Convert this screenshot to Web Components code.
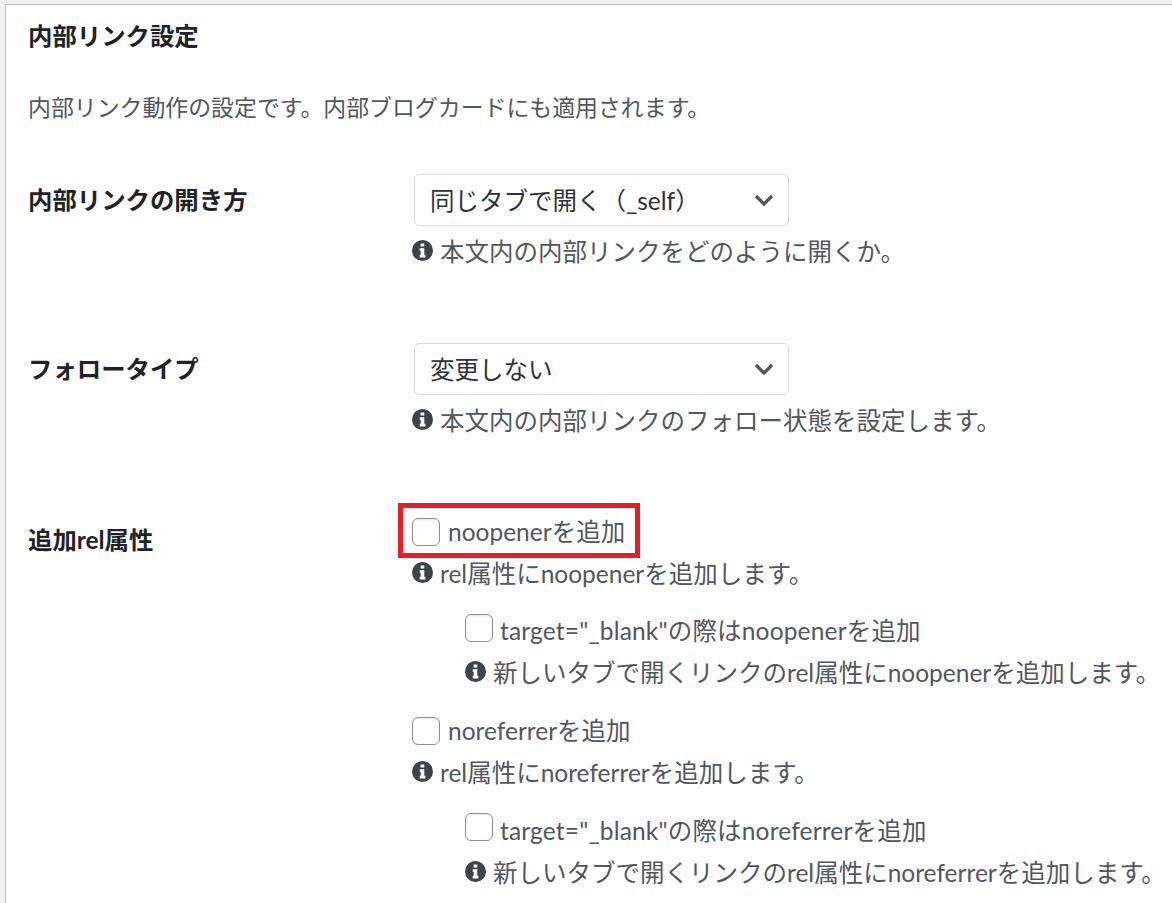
<!DOCTYPE html>
<html lang="ja">
<head>
<meta charset="utf-8">
<title>内部リンク設定</title>
<style>
html, body { margin: 0; height: 903px; overflow: hidden; }
body {
    background: #f0f0f1;
    color: #3c434a;
    font-family: "Lato", "Noto Sans CJK JP", sans-serif;
    font-size: 24.5px;
}
.sub { padding: 25px 0 0 53px; }
.sub check-option { letter-spacing: .17px; --label-gap: 7px; }
.next { padding-top: 26px; }
</style>
</head>
<body>

<settings-card heading="内部リンク設定" description="内部リンク動作の設定です。内部ブログカードにも適用されます。">
    <setting-row label="内部リンクの開き方" gap="77">
        <select-box value="同じタブで開く（_self）"></select-box>
        <help-note>本文内の内部リンクをどのように開くか。</help-note>
    </setting-row>
    <setting-row label="フォロータイプ" gap="79">
        <select-box value="変更しない"></select-box>
        <help-note>本文内の内部リンクのフォロー状態を設定します。</help-note>
    </setting-row>
    <setting-row label="追加rel属性">
        <check-option marked>noopenerを追加</check-option>
        <help-note>rel属性にnoopenerを追加します。</help-note>
        <div class="sub" style="--box-y:-1px">
            <check-option>target="_blank"の際はnoopenerを追加</check-option>
            <help-note>新しいタブで開くリンクのrel属性にnoopenerを追加します。</help-note>
        </div>
        <div class="next">
            <check-option>noreferrerを追加</check-option>
            <help-note>rel属性にnoreferrerを追加します。</help-note>
        </div>
        <div class="sub" style="padding-top:26px;--box-y:-2px">
            <check-option>target="_blank"の際はnoreferrerを追加</check-option>
            <help-note>新しいタブで開くリンクのrel属性にnoreferrerを追加します。</help-note>
        </div>
    </setting-row>
</settings-card>

<script>
class SettingsCard extends HTMLElement {
    constructor() {
        super();
        this.attachShadow({ mode: "open" });
    }

    connectedCallback() {
        this.shadowRoot.innerHTML = `
        <style>
        :host {
            display: block;
            margin: 4px 0 0 5px;
            padding: 15px 0 60px 22px;
            background: #fff;
            border-top: 1px solid #c3c4c7;
            border-left: 1px solid #c3c4c7;
        }
        h2 {
            margin: 0;
            font-size: 24.4px;
            line-height: 32px;
            font-weight: 700;
            color: #1d2327;
        }
        p {
            margin: 39px 0 51px;
            font-size: 22.9px;
            line-height: 32px;
            color: #50575e;
        }
        </style>
        <h2></h2>
        <p></p>
        <slot></slot>
        `;
        this.shadowRoot.querySelector("h2").textContent = this.getAttribute("heading");
        this.shadowRoot.querySelector("p").textContent = this.getAttribute("description");
    }
}

class SettingRow extends HTMLElement {
    constructor() {
        super();
        this.attachShadow({ mode: "open" });
    }

    connectedCallback() {
        this.shadowRoot.innerHTML = `
        <style>
        :host {
            display: flex;
            margin-bottom: ${this.getAttribute("gap") || 0}px;
        }
        .label {
            flex: 0 0 384px;
            font-size: 24.4px;
            font-weight: 700;
            line-height: 32px;
            color: #1d2327;
            padding-top: 10px;
            box-sizing: border-box;
        }
        .field { flex: 1; min-width: 0; }
        </style>
        <div class="label"></div>
        <div class="field"><slot></slot></div>
        `;
        this.shadowRoot.querySelector(".label").textContent = this.getAttribute("label");
    }
}

class SelectBox extends HTMLElement {
    constructor() {
        super();
        this.attachShadow({ mode: "open" });
    }

    connectedCallback() {
        this.shadowRoot.innerHTML = `
        <style>
        :host {
            display: flex;
            align-items: center;
            justify-content: space-between;
            box-sizing: border-box;
            width: 375px;
            height: 52px;
            margin-left: 2px;
            padding: 0 14px 2px 15px;
            background: #fff;
            border: 1px solid #dcdcde;
            border-radius: 5px;
            color: #2c3338;
        }
        svg { width: 20px; height: 12px; margin-top: 2px; }
        </style>
        <span></span>
        <svg viewBox="0 0 20 12"><path d="M2 2l8 8 8-8" fill="none" stroke="#50575e" stroke-width="3.2"/></svg>
        `;
        this.shadowRoot.querySelector("span").textContent = this.getAttribute("value");
    }
}

class HelpNote extends HTMLElement {
    constructor() {
        super();
        this.attachShadow({ mode: "open" });
    }

    connectedCallback() {
        this.shadowRoot.innerHTML = `
        <style>
        :host {
            display: flex;
            align-items: center;
            gap: 7px;
            margin-top: 8px;
            height: 32px;
            white-space: nowrap;
            color: #50575e;
        }
        svg { flex: none; width: 21px; height: 21px; fill: #3c434a; }
        </style>
        <svg viewBox="0 0 21 21"><path fill-rule="evenodd" d="M10.5 0a10.5 10.5 0 1 0 0 21a10.5 10.5 0 1 0 0-21zM8.6 3.4h3.7v3.2H8.6zM7.7 8.2h4.6v6.6h1.1v2.6H7.7v-2.6h1v-4H7.7z"/></svg>
        <span><slot></slot></span>
        `;
    }
}

class CheckOption extends HTMLElement {
    constructor() {
        super();
        this.attachShadow({ mode: "open" });
    }

    connectedCallback() {
        this.shadowRoot.innerHTML = `
        <style>
        :host {
            display: flex;
            position: relative;
            align-items: center;
            gap: var(--label-gap, 8px);
            height: 32px;
            padding-bottom: 2px;
            white-space: nowrap;
            color: #50575e;
        }
        .box {
            flex: none;
            box-sizing: border-box;
            width: 28px;
            height: 28px;
            transform: translateY(var(--box-y, 2px));
            background: #fff;
            border: 1px solid #8c8f94;
            border-radius: 6px;
            box-shadow: inset 0 1px 2px rgba(0,0,0,.1);
        }
        .mark {
            position: absolute;
            left: -14px;
            top: -11px;
            width: 242px;
            height: 55px;
            box-sizing: border-box;
            border: 5px solid #ed1c24;
        }
        </style>
        <span class="box"></span>
        <span><slot></slot></span>
        ${this.hasAttribute("marked") ? '<span class="mark"></span>' : ""}
        `;
    }
}

window.customElements.define("settings-card", SettingsCard);
window.customElements.define("setting-row", SettingRow);
window.customElements.define("select-box", SelectBox);
window.customElements.define("help-note", HelpNote);
window.customElements.define("check-option", CheckOption);
</script>
</body>
</html>
